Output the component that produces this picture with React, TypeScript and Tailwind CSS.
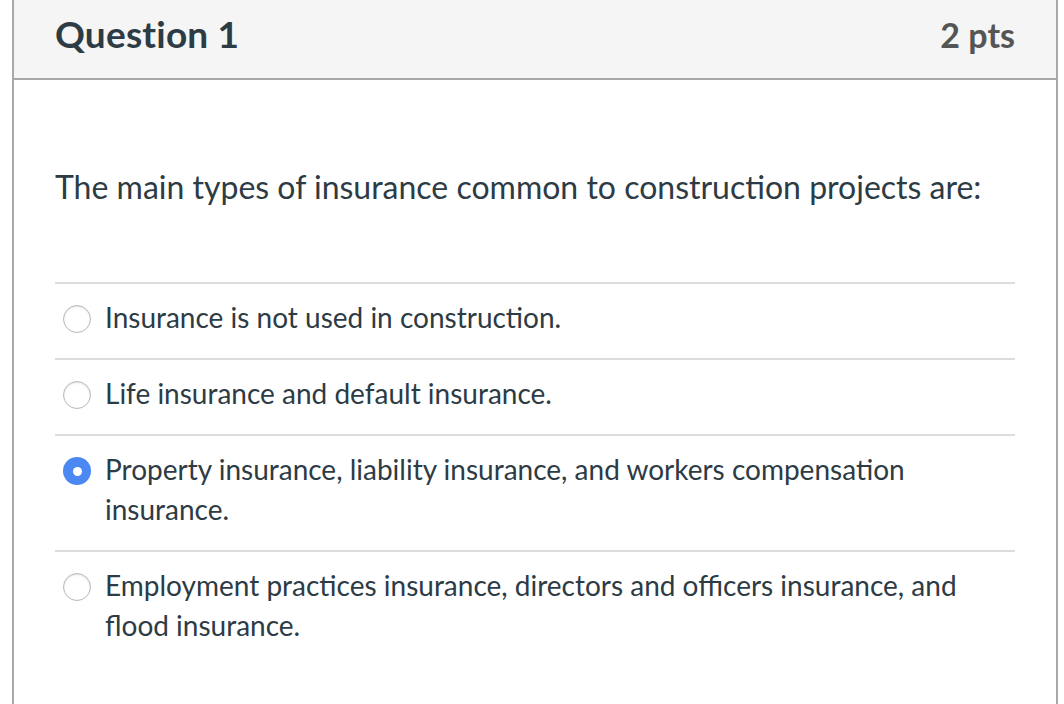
const answers = [
  { text: "Insurance is not used in construction.", selected: false },
  { text: "Life insurance and default insurance.", selected: false },
  {
    text: "Property insurance, liability insurance, and workers compensation insurance.",
    selected: true,
  },
  {
    text: "Employment practices insurance, directors and officers insurance, and flood insurance.",
    selected: false,
  },
];

function Radio({ selected }: { selected: boolean }) {
  if (selected) {
    return (
      <span className="mt-[8px] flex h-[28px] w-[28px] shrink-0 items-center justify-center rounded-full bg-[#4c88f1]">
        <span className="h-[9px] w-[9px] rounded-full bg-white" />
      </span>
    );
  }
  return (
    <span className="mt-[8px] h-[28px] w-[28px] shrink-0 rounded-full border border-[#b9b9b9] bg-white shadow-[inset_0_1px_2px_rgba(0,0,0,0.12)]" />
  );
}

export default function App() {
  return (
    <div className="h-[704px] w-[1064px] overflow-hidden bg-white font-['Lato',sans-serif] text-[#2d3b45]">
      <div className="ml-[12px] h-full w-[1046px] border-x-2 border-[#a8a8a8]">
        <div className="flex h-[80px] items-center justify-between border-b-2 border-[#a8a8a8] bg-[#f5f5f5] px-[41px] pb-[10px]">
          <h2 className="text-[37px] font-bold tracking-[0.2px] text-[#2d3b45]">Question 1</h2>
          <span className="text-[34px] font-bold text-[#555555]">2 pts</span>
        </div>
        <div className="px-[41px]">
          <p className="pt-[86px] text-[32px] leading-[42px]">
            The main types of insurance common to construction projects are:
          </p>
          <div className="mt-[74px]">
            {answers.map((a) => (
              <div
                key={a.text}
                className="flex gap-[14px] border-t-2 border-[#dddddd] pl-[8px] pt-[13px] pb-[21px]"
              >
                <Radio selected={a.selected} />
                <span className="max-w-[880px] text-[28px] leading-[40px]">{a.text}</span>
              </div>
            ))}
          </div>
        </div>
      </div>
    </div>
  );
}
